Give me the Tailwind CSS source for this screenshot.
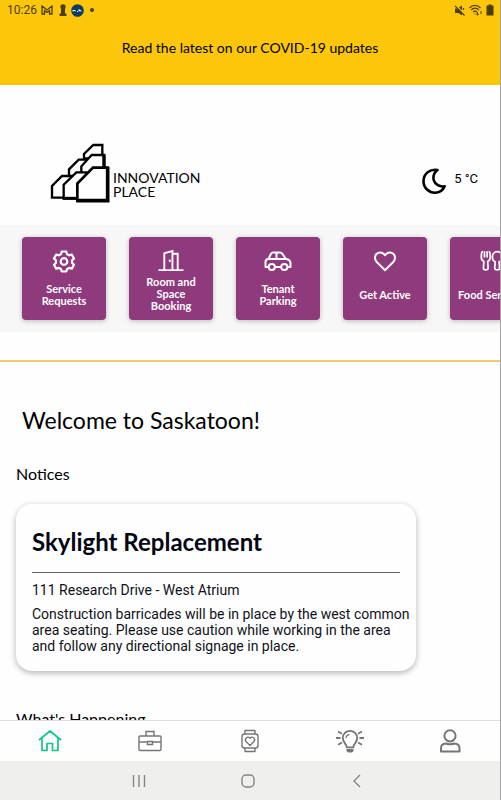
<!DOCTYPE html>
<html lang="en">
<head>
    <meta charset="UTF-8">
    <meta name="viewport" content="width=device-width, initial-scale=1.0">
    <title>Innovation Place</title>
    <script src="https://cdn.jsdelivr.net/npm/@tailwindcss/browser@4"></script>
</head>
<body class="h-screen flex flex-col overflow-hidden bg-[#fdfefd] text-black font-['Lato',sans-serif] border-r border-[#a5a5a5]">
    <!-- Status bar and banner -->
    <header class="shrink-0 bg-[#fcc60b]">
        <div class="h-5 flex items-center justify-between pl-[7px] pr-1.5 text-[#4d3d08]">
            <div class="flex items-center gap-1">
                <span class="font-['Roboto',sans-serif] text-xs">10:26</span>
                <svg class="w-3 h-3" viewBox="0 0 12 12" fill="none" stroke="currentColor" stroke-width="1.300">
                    <path d="M1 2l5 4 5-4v8H8.500V6.500L6 8.500 3.500 6.500V10H1z" />
                </svg>
                <svg class="w-2 h-3 ml-0.5" viewBox="0 0 8 12" fill="currentColor">
                    <circle cx="4" cy="2.800" r="2.600" />
                    <path d="M2 4h4v5l1.500 1v2h-7v-2L2 9z" />
                </svg>
                <svg class="w-[13px] h-[13px]" viewBox="0 0 13 13" fill="none">
                    <circle cx="6.500" cy="6.500" r="6.300" fill="#0d3b61" />
                    <path d="M2 7.500V6l1 1 1-1v1.500M6 8l1-1M8 5v2.500M8 6.500h2v1" stroke="#fff" stroke-width=".9" />
                </svg>
                <span class="w-1 h-1 ml-0.5 rounded-full bg-[#4d3d08]"></span>
            </div>
            <div class="flex items-center gap-1">
                <svg class="w-[11px] h-[11px]" viewBox="0 0 11 11" fill="currentColor">
                    <path d="M1 3.500h2.500L8 8.500v2L4.500 8H1zM5 2.500L8 .5v5z" />
                    <path d="M1 .8L10.500 10.500M9.500 3v2" stroke="currentColor" stroke-width="1.200" />
                </svg>
                <svg class="w-[13px] h-3" viewBox="0 0 13 12" fill="none" stroke="currentColor" stroke-width="1.200">
                    <path d="M.5 4C3.500.5 8.500.5 11.500 4M2.300 6c2-2.400 5.400-2.400 7.400 0M4.200 8c1-1.200 2.600-1.200 3.600 0" />
                    <path d="M6 9.300v1M8.500 8v3M7.300 10l1.200 1.200L9.700 10M12 10V7" stroke-width="1" />
                </svg>
                <svg class="w-2 h-3" viewBox="0 0 8 12" fill="currentColor">
                    <path d="M2.500.5h3v1H7.500V11.500H.5v-10h2z" />
                </svg>
            </div>
        </div>
        <a href="#" class="block pt-[18px] pb-[27px] text-center text-sm">Read the latest on our COVID-19 updates</a>
    </header>

    <main class="flex-1 min-h-0 overflow-hidden">
        <!-- Logo and weather -->
        <div class="flex items-center justify-between pt-[58px] pb-[22px] pl-[50px] pr-[22px]">
            <div class="flex items-center gap-[3px]">
                <svg class="w-[60px] h-[60px]" viewBox="30 24 180 180" fill="#fdfefd" stroke="#000" stroke-width="7">
                    <path d="M132 70V57l28-27h27v40z" />
                    <path d="M87 125v-22l29-29h24v50z" />
                    <path d="M124 120V94l31-34h37v50z" />
                    <path d="M192 58v42" stroke-width="10" />
                    <path d="M36 188v-35l30-30h30v65z" />
                    <path d="M71 190v-41l38-37h30v78z" />
                    <path d="M68 190h45" stroke-width="9" />
                    <path d="M112 197v-51l47-48h43v99z" stroke-width="8" />
                    <path d="M109 197h94V95" fill="none" stroke-width="11" />
                </svg>
                <p class="pt-6 text-sm leading-[14px]"><span class="block">INNOVATION</span><span class="block">PLACE</span></p>
            </div>
            <div class="flex items-center gap-2 pt-4">
                <svg class="w-6 h-[26px]" viewBox="0 0 24 26" fill="none" stroke="#000" stroke-width="2.600" stroke-linejoin="round">
                    <path d="M15.500 2C8 .5 1.500 6 1.500 13.200 1.500 20 7 24.700 13 24.700c4.600 0 8-2.500 9.600-6.500-4.600 1.200-9.800-1.700-10.900-6.200-.9-4 .6-7.500 3.800-10z" />
                </svg>
                <span class="pb-1 font-['Roboto',sans-serif] text-[13px] leading-5">5 °C</span>
            </div>
        </div>

        <!-- Service tiles -->
        <nav class="flex gap-[23px] pl-[22px] py-3 overflow-hidden bg-[#f6f7f6] text-[#fdfefd] text-center text-[11px] leading-3 font-bold">
            <a href="#" class="shrink-0 w-21 h-[83px] pt-3 flex flex-col items-center rounded bg-[#8f3a7c] shadow-[0_1px_5px_rgba(0,0,0,0.25)]">
                <svg class="w-7 h-6" viewBox="0 0 28 24" fill="none" stroke="currentColor" stroke-width="2.200" stroke-linejoin="round">
                    <path d="M11.700 2.500h4.600l.8 2.700 1.900 1.100 2.800-.7 2.200 3.900-2 2v2.200l2 2-2.200 3.900-2.800-.7-1.900 1.100-.8 2.500h-4.600l-.8-2.500L9 18.900l-2.800.7L4 15.700l2-2v-2.200l-2-2 2.200-3.900 2.800.7 1.900-1.100z" />
                    <circle cx="14" cy="12.500" r="3.300" />
                </svg>
                <span class="flex-1 flex items-center pb-2 pt-1">Service<br>Requests</span>
            </a>
            <a href="#" class="shrink-0 w-21 h-[83px] pt-3 flex flex-col items-center rounded bg-[#8f3a7c] shadow-[0_1px_5px_rgba(0,0,0,0.25)]">
                <svg class="w-7 h-6" viewBox="0 0 28 24" fill="none" stroke="currentColor" stroke-width="2">
                    <path d="M1 22h6V4.500L15.500 2v20H7M15.500 5H21v17h6M15.500 22H22" />
                    <path d="M12.700 11v2.500" />
                </svg>
                <span class="flex-1 flex items-center pb-2 pt-1">Room and<br>Space<br>Booking</span>
            </a>
            <a href="#" class="shrink-0 w-21 h-[83px] pt-3 flex flex-col items-center rounded bg-[#8f3a7c] shadow-[0_1px_5px_rgba(0,0,0,0.25)]">
                <svg class="w-7 h-6" viewBox="0 0 28 24" fill="none" stroke="currentColor" stroke-width="2" stroke-linejoin="round">
                    <path d="M4.500 18H1.500v-5c0-2 1-3 3-3L7 4.800C7.500 4 8 3.500 9 3.500h7c1 0 1.600.4 2.200 1.200L22 10c3 .4 4.500 2 4.500 4.500V18h-3M11 18h6M4.500 10H22M12.500 3.500V10" />
                    <circle cx="7.800" cy="18" r="3.100" />
                    <circle cx="20.300" cy="18" r="3.100" />
                </svg>
                <span class="flex-1 flex items-center pb-2 pt-1">Tenant<br>Parking</span>
            </a>
            <a href="#" class="shrink-0 w-21 h-[83px] pt-3 flex flex-col items-center rounded bg-[#8f3a7c] shadow-[0_1px_5px_rgba(0,0,0,0.25)]">
                <svg class="w-7 h-6" viewBox="0 0 28 24" fill="none" stroke="currentColor" stroke-width="2" stroke-linejoin="round">
                    <path d="M14 21.300L5.500 12.700C3.500 10.500 3.500 7 5.500 5c2.200-2.200 5.500-2 7.500.2l1 1.100 1-1.100c2-2.200 5.300-2.400 7.500-.2 2 2 2 5.500 0 7.700z" />
                </svg>
                <span class="flex-1 flex items-center pb-2 pt-1">Get Active</span>
            </a>
            <a href="#" class="shrink-0 w-21 h-[83px] pt-3 flex flex-col items-center rounded bg-[#8f3a7c] shadow-[0_1px_5px_rgba(0,0,0,0.25)]">
                <svg class="w-6 h-6" viewBox="0 0 28 24" fill="none" stroke="currentColor" stroke-width="2" stroke-linejoin="round">
                    <path d="M3.500 1c-1.500 0-1.700 1-1.800 2.500L1.500 8c0 2.300 1 3.500 3 4.500L4 20.500c0 2.500 5.500 2.500 5.500 0L9 12.500c2-1 3-2.200 3-4.500l-.3-4.500C11.600 2 11.500 1 10 1M5.200 .5V8M8.300 .5V8" />
                    <path d="M20 1c-3.500 0-5.500 3-5.500 6.500 0 2.500 1.200 4.500 3.200 5.500l-.5 7.500c0 2.500 5.600 2.500 5.600 0L22.300 13c2-1 3.200-3 3.200-5.500 0-3.500-2-6.500-5.500-6.500z" />
                </svg>
                <span class="flex-1 flex items-center pb-2 pt-1 whitespace-nowrap">Food Services</span>
            </a>
        </nav>

        <section class="mt-7 border-t-2 border-[#f1cb6c] px-4">
            <h1 class="mt-11 ml-1.5 text-[23px] leading-7">Welcome to Saskatoon!</h1>
            <h2 class="mt-[30px] text-base leading-5">Notices</h2>

            <!-- Notice card -->
            <article class="mt-5 w-[400px] max-w-full rounded-2xl bg-[#fdfefd] pl-4 pr-1 pt-6 pb-[17px] shadow-[0_2px_6px_rgba(0,0,0,0.3)] font-['Roboto',sans-serif] text-sm leading-4 text-[#10111a]">
                <h3 class="mr-3 pb-4 border-b border-[#66666a] font-['Lato',sans-serif] text-2xl leading-7 font-bold text-[#050611]">Skylight Replacement</h3>
                <p class="mt-[9px]">111 Research Drive - West Atrium</p>
                <p class="mt-2">Construction barricades will be in place by the west common<br>area seating. Please use caution while working in the area<br>and follow any directional signage in place.</p>
            </article>

            <h2 class="mt-[38px] text-base leading-5">What's Happening</h2>
        </section>
    </main>

    <!-- Bottom tabs -->
    <nav class="shrink-0 h-[41px] grid grid-cols-5 items-center justify-items-center border-t border-[#dedfde] bg-[#fdfefd] text-[#747674]">
        <a href="#" aria-label="Home" class="text-[#12c684]">
            <svg class="w-6 h-6" viewBox="0 0 24 24" fill="none" stroke="currentColor" stroke-width="1.700" stroke-linejoin="round">
                <path d="M1 11L12 2l11 9M4 9v12.500h5v-7h5.500v7H20V9" />
            </svg>
        </a>
        <a href="#" aria-label="Work">
            <svg class="w-6 h-6" viewBox="0 0 24 24" fill="none" stroke="currentColor" stroke-width="1.400">
                <rect x="1" y="7" width="22" height="14.500" rx="1" />
                <path d="M8 7V2.500h8V7M1 13h8.500M14.500 13H23M9.500 12.500h5v3h-5z" />
            </svg>
        </a>
        <a href="#" aria-label="Wellness">
            <svg class="w-6 h-6" viewBox="0 0 24 24" fill="none" stroke="currentColor" stroke-width="1.400" stroke-linejoin="round">
                <rect x="4" y="5" width="16" height="14" rx="2.500" />
                <path d="M7 5V1.500h10V5M7 19v3.500h10V19" />
                <path d="M12 16.500l-4-4c-2-2.500 1.500-6 4-3.300 2.500-2.700 6 .8 4 3.300z" />
            </svg>
        </a>
        <a href="#" aria-label="Ideas">
            <svg class="w-7 h-6" viewBox="0 0 28 24" fill="none" stroke="currentColor" stroke-width="1.800">
                <path d="M10.800 18.300c0-3.300-4-4.500-4-9.300a7.200 7.200 0 0 1 14.400 0c0 4.800-4 6-4 9.300z" />
                <path d="M10 9c.2-2 1.500-3.400 3.500-3.600" stroke-width="1.200" />
                <path d="M0 9h4.500M23.500 9H28M2 2.500L6 4.700M26 2.500l-4 2.200M2 15.800l4-2.300M26 15.800l-4-2.300" />
                <path d="M10.500 20h7v2l-1.500 1.500h-4L10.500 22z" fill="currentColor" stroke="none" />
            </svg>
        </a>
        <a href="#" aria-label="Profile">
            <svg class="w-6 h-6" viewBox="0 0 24 24" fill="none" stroke="currentColor" stroke-width="2" stroke-linejoin="round">
                <circle cx="12" cy="6.800" r="5.600" />
                <path d="M3 22.500v-3C3 16 5 14.500 8 14.500c2.500 1 5.500 1 8 0 3 0 5.500 1.500 5.500 5v3z" />
            </svg>
        </a>
    </nav>

    <!-- System navigation -->
    <div class="shrink-0 h-[39px] pl-[84px] pr-[88px] grid grid-cols-3 items-center justify-items-center bg-[#eff0ee] text-[#858684]">
        <button aria-label="Recent apps">
            <svg class="w-3.5 h-3.5" viewBox="0 0 14 14" fill="none" stroke="currentColor" stroke-width="1.400">
                <path d="M1.500 1v12M7 1v12M12.500 1v12" />
            </svg>
        </button>
        <button aria-label="Home screen">
            <svg class="w-3.5 h-3.5" viewBox="0 0 14 14" fill="none" stroke="currentColor" stroke-width="1.400">
                <rect x="1" y="1" width="12" height="12" rx="4" />
            </svg>
        </button>
        <button aria-label="Back">
            <svg class="w-3.5 h-3.5" viewBox="0 0 14 14" fill="none" stroke="currentColor" stroke-width="1.400">
                <path d="M10 1L4 7l6 6" />
            </svg>
        </button>
    </div>
</body>
</html>
